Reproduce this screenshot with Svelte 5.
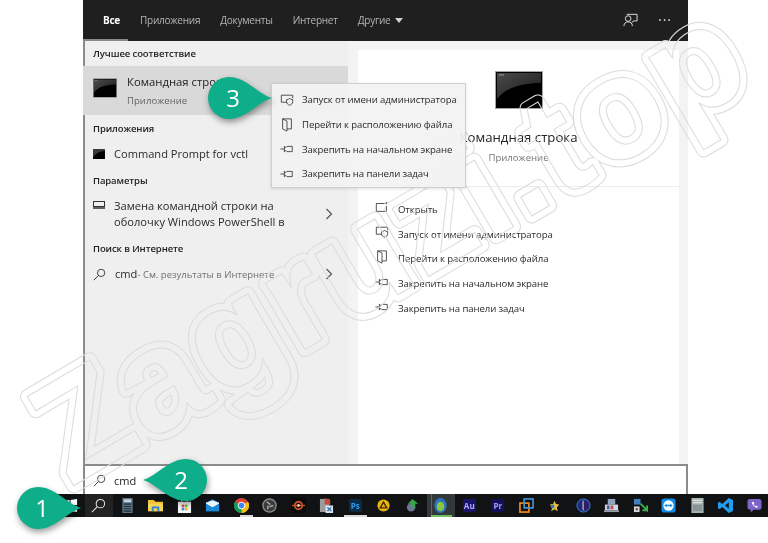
<script>
  const tabs = ['Приложения', 'Документы', 'Интернет'];
  const menuItems = [
    ['admin', 'Запуск от имени администратора'],
    ['folder', 'Перейти к расположению файла'],
    ['pin', 'Закрепить на начальном экране'],
    ['pin', 'Закрепить на панели задач']
  ];
  const actions = [['open', 'Открыть'], ...menuItems];
</script>

{#snippet act(name)}
  <svg class="act" viewBox="0 0 16 16" fill="none" stroke="#3c3c3c" stroke-width="1">
    {#if name === 'admin'}
      <path d="M8 10.500H1.500V2.500H14.500V6" />
      <path d="M7.500 7.500C9 7.500 10 7 11 6.200C12 7 13 7.500 14.500 7.500V10C14.500 12 13 13.300 11 14C9 13.300 7.500 12 7.500 10Z" />
    {:else if name === 'folder'}
      <path d="M3 1H13V12.500H8M3 1V12.500L8 15V3.500L3 1" />
    {:else if name === 'pin'}
      <path d="M0.500 8H5M5 4.500V11.500M5 6H7L8 5H14V11H8L7 10H5" />
    {:else}
      <path d="M11 4H1.500V13H13V7" />
      <path d="M13 2.500V4.500M12 3.500H14" />
    {/if}
  </svg>
{/snippet}

{#snippet consoleIcon(cls)}
  <svg class={cls} viewBox="0 0 48 38">
    <defs>
      <linearGradient id="gloss" x1="0" y1="0" x2="1" y2="1">
        <stop offset="0" stop-color="#4c4c4c" />
        <stop offset="1" stop-color="#181818" />
      </linearGradient>
    </defs>
    <rect x="0.500" y="0.500" width="47" height="37" fill="#000" stroke="#a4a4a4" />
    <path d="M2 2H46V12C28 12 11 16 2 28Z" fill="url(#gloss)" />
    <path d="M4 4H9" stroke="#999" />
  </svg>
{/snippet}

{#snippet search(cls)}
  <svg class={cls} viewBox="0 0 16 16" fill="none" stroke="currentColor" stroke-width="1.100">
    <circle cx="10" cy="6" r="4.500" />
    <path d="M6.800 9.200L1 15" />
  </svg>
{/snippet}

{#snippet bubble(cls, num)}
  <div class="callout {cls}">
    <svg viewBox="0 0 64 42">
      <path d="M64 21C50 17 38 0 21 0A21 21 0 0 0 21 42C38 42 50 25 64 21Z" fill="#0fae8b" />
    </svg>
    <span>{num}</span>
  </div>
{/snippet}

<div class="page">
  <div class="window">
    <header class="tabs">
      <span class="tab current">Все</span>
      {#each tabs as t}<span class="tab">{t}</span>{/each}
      <span class="tab">Другие <i class="caret"></i></span>
      <span class="grow"></span>
      <svg class="feedback" viewBox="0 0 16 16" fill="none" stroke="#e4e4e4">
        <path d="M4 2.500H15V9.500H11L9.500 11.500" />
        <circle cx="5.500" cy="7" r="3" />
        <path d="M1 15C1 12 3 10.500 5.500 10.500C8 10.500 10 12 10 15" />
      </svg>
      <span class="more">···</span>
    </header>

    <div class="body">
      <section class="left">
        <h3 class="first">Лучшее соответствие</h3>
        <div class="best">
          {@render consoleIcon('ico-mid')}
          <div>
            <div class="best-title">Командная строка</div>
            <div class="best-sub">Приложение</div>
          </div>
        </div>
        <h3 class="h-apps">Приложения</h3>
        <div class="row row-app">
          <svg class="ico-small" viewBox="0 0 12 10"><rect width="12" height="10" fill="#000" /><path d="M0 0H12V2C7 2 3 4 0 8Z" fill="#3a3a3a" /></svg>
          Command Prompt for vctl
        </div>
        <h3 class="h-par">Параметры</h3>
        <div class="row row-par">
          <svg class="ico-small" viewBox="0 0 12 10" fill="none" stroke="#333"><rect x="0.500" y="0.500" width="11" height="5" /><path d="M0 7H12" stroke-width="1.500" /></svg>
          <div class="grow">Замена командной строки на<br />оболочку Windows PowerShell в</div>
          <svg class="chev" viewBox="0 0 8 12" fill="none" stroke="#555" stroke-width="1.200"><path d="M1.500 1L6.500 6L1.500 11" /></svg>
        </div>
        <h3 class="h-web">Поиск в Интернете</h3>
        <div class="row row-web">
          <span class="mag">{@render search('ico-search')}</span>
          <div class="grow"><span>cmd</span><span class="dim"> - См. результаты в Интернете</span></div>
          <svg class="chev" viewBox="0 0 8 12" fill="none" stroke="#555" stroke-width="1.200"><path d="M1.500 1L6.500 6L1.500 11" /></svg>
        </div>
      </section>

      <section class="right">
        <div class="hero">
          {@render consoleIcon('ico-big')}
          <div class="hero-title">Командная строка</div>
          <div class="hero-sub">Приложение</div>
        </div>
        <ul class="actions">
          {#each actions as [ic, label]}
            <li>{@render act(ic)}<span>{label}</span></li>
          {/each}
        </ul>
      </section>
    </div>

    <div class="searchbar">
      <span class="mag">{@render search('ico-search')}</span>
      <span>cmd</span>
    </div>
  </div>

  <footer class="taskbar">
    <span class="slot"><svg class="ti" viewBox="0 0 16 16" fill="#fff"><path d="M1 3L7 2V7.500H1ZM8 2L15 1V7.500H8ZM1 8.500H7V14L1 13ZM8 8.500H15V15L8 14Z" /></svg></span>
    <span class="slot slot-search">{@render search('ti')}</span>
    <span class="slot"><svg class="ti" viewBox="0 0 16 16"><rect x="2.500" width="11" height="16" fill="#5d7486" /><rect x="4" y="1.500" width="8" height="3" fill="#c7d3dc" /><path d="M4 6.500H12M4 9H12M4 11.500H12M4 14H12" stroke="#1e2c38" stroke-width="1.200" /></svg></span>
    <span class="slot"><svg class="ti" viewBox="0 0 16 16"><path d="M0 2H6L8 4H16V14H0Z" fill="#f2c230" /><path d="M0 6H16V14H0Z" fill="#f7d358" /><rect x="4" y="9" width="8" height="5" fill="#2f88d0" /><rect x="6" y="11" width="4" height="3" fill="#f7d358" /></svg></span>
    <span class="slot"><svg class="ti" viewBox="0 0 16 16"><rect x="1" y="4" width="14" height="12" fill="#f4f4f4" /><path d="M5 4V2.500Q8-.5 11 2.500V4" fill="none" stroke="#ddd" stroke-width="1.200" /><rect x="5" y="7" width="2.800" height="2.800" fill="#e74c3c" /><rect x="8.400" y="7" width="2.800" height="2.800" fill="#6fbf3f" /><rect x="5" y="10.400" width="2.800" height="2.800" fill="#2f8fe0" /><rect x="8.400" y="10.400" width="2.800" height="2.800" fill="#f5b921" /></svg></span>
    <span class="slot"><svg class="ti" viewBox="0 0 16 16"><path d="M1 5L8 1L15 5V14H1Z" fill="#0f6cbd" /><path d="M1 6L8 10L15 6V5L8 2.500L1 5Z" fill="#eaf4fb" /><path d="M1 6L8 10L15 6V14H1Z" fill="#1a8ad8" /></svg></span>
    <span class="slot running short"><svg class="ti" viewBox="0 0 16 16"><circle cx="8" cy="8" r="8" fill="#db4437" /><path d="M8 8L15 4A8 8 0 0 1 8 16Z" fill="#f4c20d" /><path d="M8 8L8 16A8 8 0 0 1 1 4Z" fill="#0f9d58" /><circle cx="8" cy="8" r="3.600" fill="#4285f4" stroke="#fff" /></svg></span>
    <span class="slot"><svg class="ti" viewBox="0 0 16 16" fill="none"><circle cx="8" cy="8" r="7" fill="#3a3a3a" stroke="#8a8a8a" stroke-width="1.500" /><path d="M5 4L9 7M12 8L8 9.500M6 12L6.500 8" stroke="#aaa" stroke-width="1.500" /></svg></span>
    <span class="slot"><svg class="ti" viewBox="0 0 16 16"><rect width="16" height="16" fill="#0a0a0a" /><circle cx="8" cy="8" r="4" fill="none" stroke="#c8502a" stroke-width="2" /><path d="M1 8H15" stroke="#c8502a" stroke-width="1.500" /><circle cx="8" cy="8" r="1.500" fill="#e8d0a0" /></svg></span>
    <span class="slot"><svg class="ti" viewBox="0 0 16 16"><rect x="1" y="1" width="10" height="14" fill="#9c9c9c" /><path d="M6 0L12 2L12 7H6Z" fill="#c84a3c" /><rect x="7" y="8" width="8" height="8" fill="#d8e4f0" /><path d="M9 10L13 14M13 10L9 14" stroke="#3c6ca8" stroke-width="1.500" /></svg></span>
    <span class="slot running"><span class="adobe ps">Ps</span></span>
    <span class="slot"><svg class="ti" viewBox="0 0 16 16"><circle cx="8" cy="8" r="6.500" fill="#f0b316" /><path d="M8 4.500L11.500 10.500H4.500Z" fill="none" stroke="#402c00" stroke-width="1.500" /></svg></span>
    <span class="slot"><svg class="ti" viewBox="0 0 16 16"><circle cx="6.500" cy="10" r="4.500" fill="#6d7690" /><path d="M8 1L14 6H11V10H7V6H3Z" fill="#37a34a" /></svg></span>
    <span class="slot active"><svg class="ti" viewBox="0 0 16 16"><ellipse cx="8" cy="8" rx="6.500" ry="8" fill="#2a74c4" /><ellipse cx="8" cy="9" rx="4" ry="5" fill="#8cc63f" /></svg></span>
    <span class="slot"><span class="adobe au">Au</span></span>
    <span class="slot"><span class="adobe pr">Pr</span></span>
    <span class="slot"><svg class="ti" viewBox="0 0 16 16" fill="none" stroke-width="1.800"><rect x="1" y="5.500" width="9.500" height="9.500" stroke="#f28c13" /><rect x="5.500" y="1" width="9.500" height="9.500" stroke="#3f93d8" /></svg></span>
    <span class="slot"><svg class="ti" viewBox="0 0 16 16"><path d="M8 3L9.500 6.500L13 7L10.500 10L11.500 14L8 12L4.500 14L5.500 10L3 7L6.500 6.500Z" fill="#e8c040" /><circle cx="6" cy="9" r="2" fill="#3c78b8" /></svg></span>
    <span class="slot"><svg class="ti" viewBox="0 0 16 16"><circle cx="8" cy="8" r="7" fill="#1c2b7a" stroke="#3f7fe0" /><path d="M8 3V13" stroke="#fff" stroke-width="1.800" /><path d="M8 3A5 5 0 0 1 8 13Z" fill="#3a1a5a" /></svg></span>
    <span class="slot"><svg class="ti" viewBox="0 0 16 16"><rect x="4" y="1" width="8" height="6" fill="#8fa4bd" /><rect x="1" y="7" width="14" height="6" fill="#d2d8e2" /><rect x="3" y="8" width="3" height="4" fill="#4a5fa8" /><rect x="7" y="8" width="3" height="4" fill="#c0504d" /><rect y="13" width="16" height="2" fill="#9aa0aa" /></svg></span>
    <span class="slot"><svg class="ti" viewBox="0 0 16 16"><rect x="1" y="1" width="7" height="6" fill="#3f7fc0" /><rect x="1" y="9" width="6" height="6" fill="#d8d8d8" /><rect x="3" y="11" width="2" height="2" fill="#333" /><path d="M8 6L15 13V8M15 13H10" stroke="#3fae49" stroke-width="2" fill="none" /></svg></span>
    <span class="slot"><svg class="ti" viewBox="0 0 16 16"><rect x="0.500" y="0.500" width="15" height="15" rx="3" fill="#0e8ee9" /><circle cx="8" cy="8" r="5.500" fill="#fff" /><path d="M3.500 8L6 6V7.200H10V6L12.500 8L10 10V8.800H6V10Z" fill="#0e8ee9" /></svg></span>
    <span class="slot"><svg class="ti" viewBox="0 0 16 16"><rect x="1.500" width="13" height="16" fill="#a9b3b0" /><path d="M3 2.500H13M3 5H13" stroke="#e8eeec" /><rect x="3" y="7" width="10" height="7" fill="#8b9694" /></svg></span>
    <span class="slot"><svg class="ti" viewBox="0 0 16 16"><path d="M11.500 0L16 2.200V13.800L11.500 16L4.500 9.500L1.500 12L0 11V5L1.500 4L4.500 6.500ZM11.500 4.500L7.500 8L11.500 11.500Z" fill="#1f9cf0" /></svg></span>
    <span class="slot"><svg class="ti" viewBox="0 0 16 16"><path d="M3 1H13Q15.500 1 15.500 4V9.500Q15.500 12.500 13 12.500H7L4 15.500V12.500Q0.500 12.500 0.500 9.500V4Q0.500 1 3 1Z" fill="#7d64c8" /><path d="M5 4.500C6 8 8 10 11 10.500L11.500 9L9.500 8L8.800 8.800C8 8.300 7.400 7.500 7 6.800L7.800 6L7 4Z" fill="#fff" /></svg></span>
  </footer>

  <svg class="watermark" viewBox="0 0 768 543" aria-hidden="true">
    <defs>
      <text id="wm" x="0" y="0" transform="translate(70 488) rotate(-30.500)" font-family="'Liberation Sans', sans-serif" font-weight="700" font-size="146" letter-spacing="1">Zagruzi.top</text>
      <mask id="ring" maskUnits="userSpaceOnUse" x="0" y="0" width="768" height="543">
        <use href="#wm" fill="#fff" stroke="#fff" stroke-width="15" stroke-linejoin="round" />
        <use href="#wm" fill="#000" stroke="#000" stroke-width="13" stroke-linejoin="round" />
      </mask>
    </defs>
    <rect width="768" height="543" fill="#dcdcdc" mask="url(#ring)" />
    <use href="#wm" fill="none" stroke="#dcdcdc" stroke-width="1" />
  </svg>

  <div class="menu">
    {#each menuItems as [ic, label]}
      <div class="menu-item">{@render act(ic)}<span>{label}</span></div>
    {/each}
  </div>

  {@render bubble('c1', '1')}
  {@render bubble('c2', '2')}
  {@render bubble('c3', '3')}
</div>

<style>
  :global(body) { margin: 0; background: #fff; }
  .page {
    position: relative;
    width: 768px;
    height: 543px;
    overflow: hidden;
    background: #fff;
    font-family: "Open Sans", "Noto Sans", sans-serif;
    color: #1a1a1a;
    filter: blur(0.3px);
  }
  .window { margin-left: 83px; width: 605px; display: flex; flex-direction: column; height: 494px; }

  .tabs {
    height: 41px;
    box-sizing: border-box;
    background: #1f1f1f;
    display: flex;
    align-items: center;
    gap: 20px;
    padding: 0 17px 2px 20px;
    color: #b4b4b4;
    font-size: 10px;
    letter-spacing: -0.25px;
    position: relative;
  }
  .tab { white-space: nowrap; }
  .current { color: #fff; font-weight: 700; }
  .current::after {
    content: "";
    position: absolute;
    left: 0;
    bottom: 0;
    width: 45px;
    height: 2px;
    background: #8a8a8a;
  }
  .caret {
    display: inline-block;
    width: 0;
    height: 0;
    border: 4.500px solid transparent;
    border-top: 5px solid #d0d0d0;
    border-bottom: 0;
    margin-left: 2px;
    vertical-align: 1px;
  }
  .grow { flex: 1; }
  .feedback { width: 15px; height: 15px; }
  .more { color: #ddd; font-size: 14px; width: 13px; letter-spacing: 1px; white-space: nowrap; }

  .body { flex: 1; display: flex; min-height: 0; }
  .left {
    width: 265px;
    box-sizing: border-box;
    background: #efefef;
    border-left: 2px solid #8c8c8c;
  }
  .right {
    flex: 1;
    background: #fff;
    border-top: 9px solid #f3f3f3;
    border-left: 10px solid #f3f3f3;
    border-right: 9px solid #f3f3f3;
  }
  h3 { margin: 0; padding-left: 8px; font-size: 9.500px; letter-spacing: -0.1px; font-weight: 600; color: #222; line-height: 14px; }
  .first { padding-top: 6px; }
  .best {
    margin: 5px 0 0 -2px;
    height: 49px;
    background: #d9d9d9;
    display: flex;
    align-items: center;
    gap: 10px;
    padding-left: 10px;
    box-sizing: border-box;
  }
  .ico-mid { width: 24px; height: 20px; display: block; margin-bottom: 5px; }
  .ico-big { width: 48px; height: 38px; display: block; }
  .best-title { font-size: 11.300px; line-height: 16px; color: #222; }
  .best-sub { font-size: 9.600px; line-height: 15px; color: #666; margin-top: 3px; }
  .h-apps { margin-top: 7px; }
  .row { display: flex; align-items: center; padding-left: 8px; font-size: 11.100px; color: #2a2a2a; line-height: 16px; white-space: nowrap; }
  .row-app { height: 26px; margin-top: 5px; gap: 9px; }
  .row-par { height: 32px; margin-top: 10px; gap: 9px; }
  .row-web { height: 20px; margin-top: 8px; gap: 9px; }
  .h-par { margin-top: 7px; }
  .h-web { margin-top: 12px; }
  .ico-small { width: 12px; height: 10px; flex: none; margin-top: -1px; }
  .row-par .ico-small { margin-top: -16px; }
  .mag { color: #333; display: flex; }
  .ico-search { width: 13px; height: 13px; display: block; }
  .chev { width: 8px; height: 12px; margin-right: 15px; flex: none; }
  .dim { font-size: 9.500px; color: #707070; }

  .hero { display: flex; flex-direction: column; align-items: center; padding-top: 21px; }
  .hero-title { font-size: 13.200px; line-height: 18px; margin-top: 19px; color: #222; }
  .hero-sub { font-size: 9.600px; line-height: 14px; margin-top: 5px; color: #777; }
  .actions { list-style: none; margin: 21px 0 0; padding: 10px 0 0 17px; border-top: 1px solid #ececec; }
  .actions li { display: flex; align-items: center; height: 24.800px; gap: 9px; font-size: 9.600px; letter-spacing: -0.1px; color: #2a2a2a; }
  .act { width: 14px; height: 14px; flex: none; margin-top: -4px; }

  .searchbar {
    height: 30px;
    box-sizing: border-box;
    background: #fff;
    border: 2px solid #8c8c8c;
    border-bottom: 0;
    display: flex;
    align-items: center;
    gap: 8px;
    padding-left: 8px;
    font-size: 11px;
    color: #222;
  }

  .taskbar {
    margin-left: 56px;
    height: 23px;
    background: #111213;
    display: flex;
    align-items: stretch;
  }
  .slot { width: 28.500px; flex: none; display: flex; align-items: center; justify-content: center; box-sizing: border-box; position: relative; }
  .slot-search { background: #222; color: #e6e6e6; }
  .ti { width: 15px; height: 15px; display: block; }
  .running::after { content: ""; position: absolute; left: 3px; right: 3px; bottom: 0; height: 2px; background: #dadada; }
  .short::after { left: 13px; }
  .active { background: #33383a; }
  .active::before { content: ""; position: absolute; left: 4px; top: 0; bottom: 0; width: 1px; background: #3d7a3d; }
  .active::after { content: ""; position: absolute; left: 4px; right: 3px; bottom: 0; height: 2px; background: #6ec060; }
  .adobe {
    width: 13px; height: 13px; border-radius: 2px;
    display: flex; align-items: center; justify-content: center;
    font-size: 8px; font-weight: 700; line-height: 1;
  }
  .ps { background: #0c2a44; color: #2e9ce8; }
  .au { background: #1a1468; color: #b6a8ff; }
  .pr { background: #12105a; color: #a9a0f5; }

  .watermark { position: absolute; inset: 0; width: 768px; height: 543px; pointer-events: none; }

  .menu {
    position: absolute;
    left: 271px;
    top: 83px;
    width: 195px;
    height: 105px;
    box-sizing: border-box;
    background: rgba(242, 242, 242, 0.93);
    border: 1px solid #cfcfcf;
    padding-top: 3.500px;
    box-shadow: 0 1px 3px rgba(0, 0, 0, 0.12);
  }
  .menu-item { display: flex; align-items: center; height: 24.700px; padding-left: 8px; gap: 8px; font-size: 9.600px; letter-spacing: -0.1px; color: #2a2a2a; white-space: nowrap; }
  .menu-item .act { margin-top: 0; }

  .callout { position: absolute; width: 64px; height: 42px; filter: drop-shadow(1px 3px 3px rgba(0, 0, 0, 0.4)); }
  .callout svg { width: 100%; height: 100%; display: block; }
  .callout span {
    position: absolute; left: 0; top: 0; width: 50px; line-height: 42px; text-align: center;
    color: #fff; font-size: 24px; font-family: "Open Sans", sans-serif;
  }
  .c1 { left: 17px; top: 487px; }
  .c2 { left: 143px; top: 459px; }
  .c2 svg { transform: scaleX(-1); }
  .c2 span { left: 13px; }
  .c3 { left: 208px; top: 77px; }
</style>
